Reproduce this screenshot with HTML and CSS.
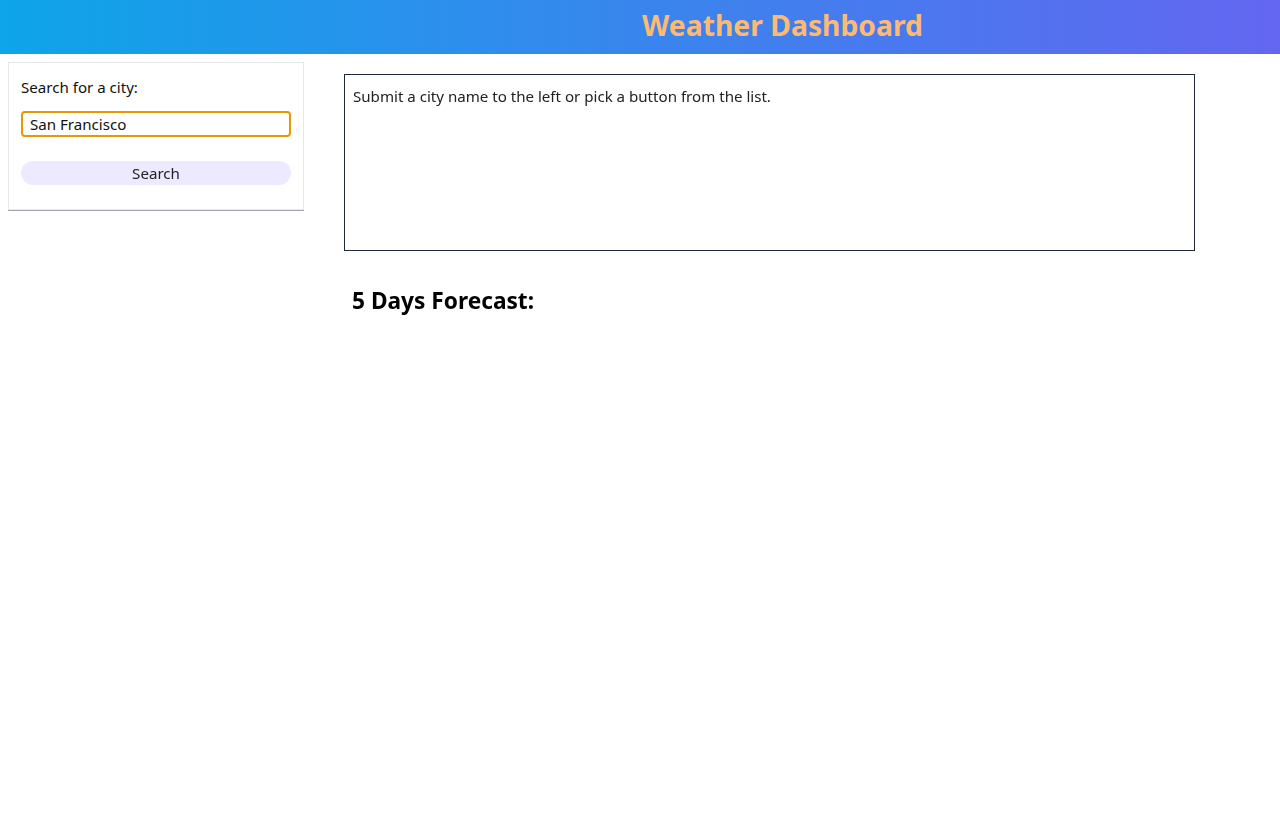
FILE: index.html
```html
<!DOCTYPE html>
<html lang="en">
<head>
<meta charset="utf-8">
<title>Weather Dashboard</title>
<link rel="stylesheet" href="styles.css">
</head>
<body>
<header class="topbar">
  <h1 class="title">Weather Dashboard</h1>
</header>
<div class="layout">
  <aside class="sidebar">
    <form class="search-card">
      <label class="search-label" for="city">Search for a city:</label>
      <input class="search-input" id="city" type="text" value="San Francisco" autofocus>
      <button class="search-btn" type="button">Search</button>
    </form>
  </aside>
  <main class="content">
    <section class="current">
      <p class="current-text">Submit a city name to the left or pick a button from the list.</p>
    </section>
    <h2 class="forecast-title">5 Days Forecast:</h2>
  </main>
</div>
</body>
</html>
```

FILE: styles.css
```css
* { box-sizing: border-box; }
body {
  margin: 0;
  font-family: "Noto Sans", "Open Sans", sans-serif;
  color: #111;
  background: #fff;
}
.topbar {
  height: 54px;
  background: linear-gradient(90deg, #0ea5e9, #6366f1);
  display: flex;
  align-items: center;
  padding-left: 642px;
  padding-bottom: 4px;
}
.title {
  margin: 0;
  font-size: 28.3px;
  font-weight: 700;
  color: #fdba74;
  line-height: 1;
}
.layout {
  display: flex;
  padding: 8px;
  gap: 40px;
}
.sidebar {
  width: 296px;
  flex: none;
}
.search-card {
  border: 1px solid #e5e7eb;
  box-shadow: 0 1px 0 #a3a8ae;
  padding: 12px 12px 24px;
  display: flex;
  flex-direction: column;
}
.search-label {
  font-size: 15.1px;
  line-height: 24px;
  color: #111;
}
.search-input {
  margin-top: 12px;
  height: 26px;
  border: 2px solid #e69a00;
  border-radius: 4px;
  padding: 0 7px;
  font: inherit;
  font-size: 15.1px;
  color: #111;
  caret-color: #000;
  outline: none;
}
.search-btn {
  margin-top: 24px;
  height: 24px;
  border: none;
  border-radius: 12px;
  background: #ede9fe;
  font: inherit;
  font-size: 15.1px;
  color: #222;
  padding: 0;
}
.content {
  flex: none;
  width: 851px;
  padding-top: 12px;
}
.current {
  height: 177px;
  border: 1px solid #1e293b;
  padding: 8px;
}
.current-text {
  margin: 0;
  font-size: 15.1px;
  line-height: 26px;
  color: #222;
}
.forecast-title {
  margin: 34px 0 0 8px;
  font-size: 22.7px;
  font-weight: 700;
  color: #000;
  line-height: 32px;
}
```
